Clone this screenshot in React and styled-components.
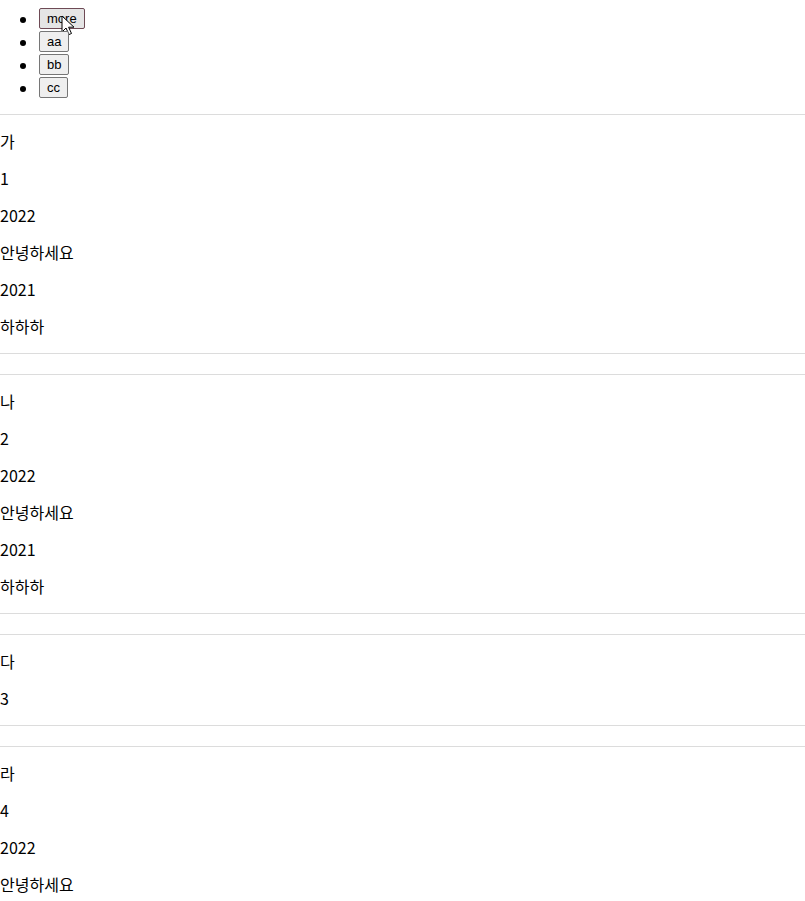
import React from "react";
import styled, { createGlobalStyle } from "styled-components";

const GlobalStyle = createGlobalStyle`
  body {
    margin: 0;
    background: #fff;
    color: #000;
    font-family: "Noto Sans CJK KR", "Noto Sans", sans-serif;
    font-size: 16px;
  }
`;

const Menu = styled.ul`
  margin: 8px 0 14px;
  padding-left: 39px;
  list-style: disc;
`;

const MenuItem = styled.li`
  line-height: 23px;
  height: 23px;
`;

const ButtonWrap = styled.span`
  position: relative;
  display: inline-flex;
  vertical-align: top;
`;

const MenuButton = styled.button`
  font-family: "Liberation Sans", Arial, sans-serif;
  font-size: 13px;
  line-height: 15px;
  padding: 2px 7px;
  color: #000;
  background: ${(p) => (p.$hover ? "#e5e5e5" : "#efefef")};
  border: 1px solid ${(p) => (p.$hover ? "#6e4a55" : "#767676")};
  border-radius: 2px;
  cursor: pointer;
`;

const Cursor = styled.svg`
  position: absolute;
  left: 22px;
  top: 7px;
  pointer-events: none;
`;

const Card = styled.section`
  margin-bottom: 20px;
`;

const Divider = styled.hr`
  margin: 0;
  border: none;
  border-top: 1px solid #dcdcdc;
`;

const Line = styled.p`
  margin: 16px 0;
  line-height: 21px;
`;

const menu = ["more", "aa", "bb", "cc"];

const cards = [
  { name: "가", id: 1, rows: ["2022", "안녕하세요", "2021", "하하하"] },
  { name: "나", id: 2, rows: ["2022", "안녕하세요", "2021", "하하하"] },
  { name: "다", id: 3, rows: [] },
  { name: "라", id: 4, rows: ["2022", "안녕하세요"] },
];

const App = () => {
  return (
    <>
      <GlobalStyle />
      <Menu>
        {menu.map((label, i) => (
          <MenuItem key={label}>
            <ButtonWrap>
              <MenuButton $hover={i === 0}>{label}</MenuButton>
              {i === 0 && (
                <Cursor width="14" height="21" viewBox="0 0 14 21">
                  <path
                    d="M1 1 L1 17 L5 13 L8 19.5 L10.5 18.5 L7.6 12.2 L13 12.2 Z"
                    fill="#fff"
                    stroke="#000"
                    strokeWidth="1"
                    strokeLinejoin="round"
                  />
                </Cursor>
              )}
            </ButtonWrap>
          </MenuItem>
        ))}
      </Menu>
      {cards.map((card) => (
        <Card key={card.id}>
          <Divider />
          <Line>{card.name}</Line>
          <Line>{card.id}</Line>
          {card.rows.map((row, i) => (
            <Line key={i}>{row}</Line>
          ))}
          <Divider />
        </Card>
      ))}
    </>
  );
};

export default App;
